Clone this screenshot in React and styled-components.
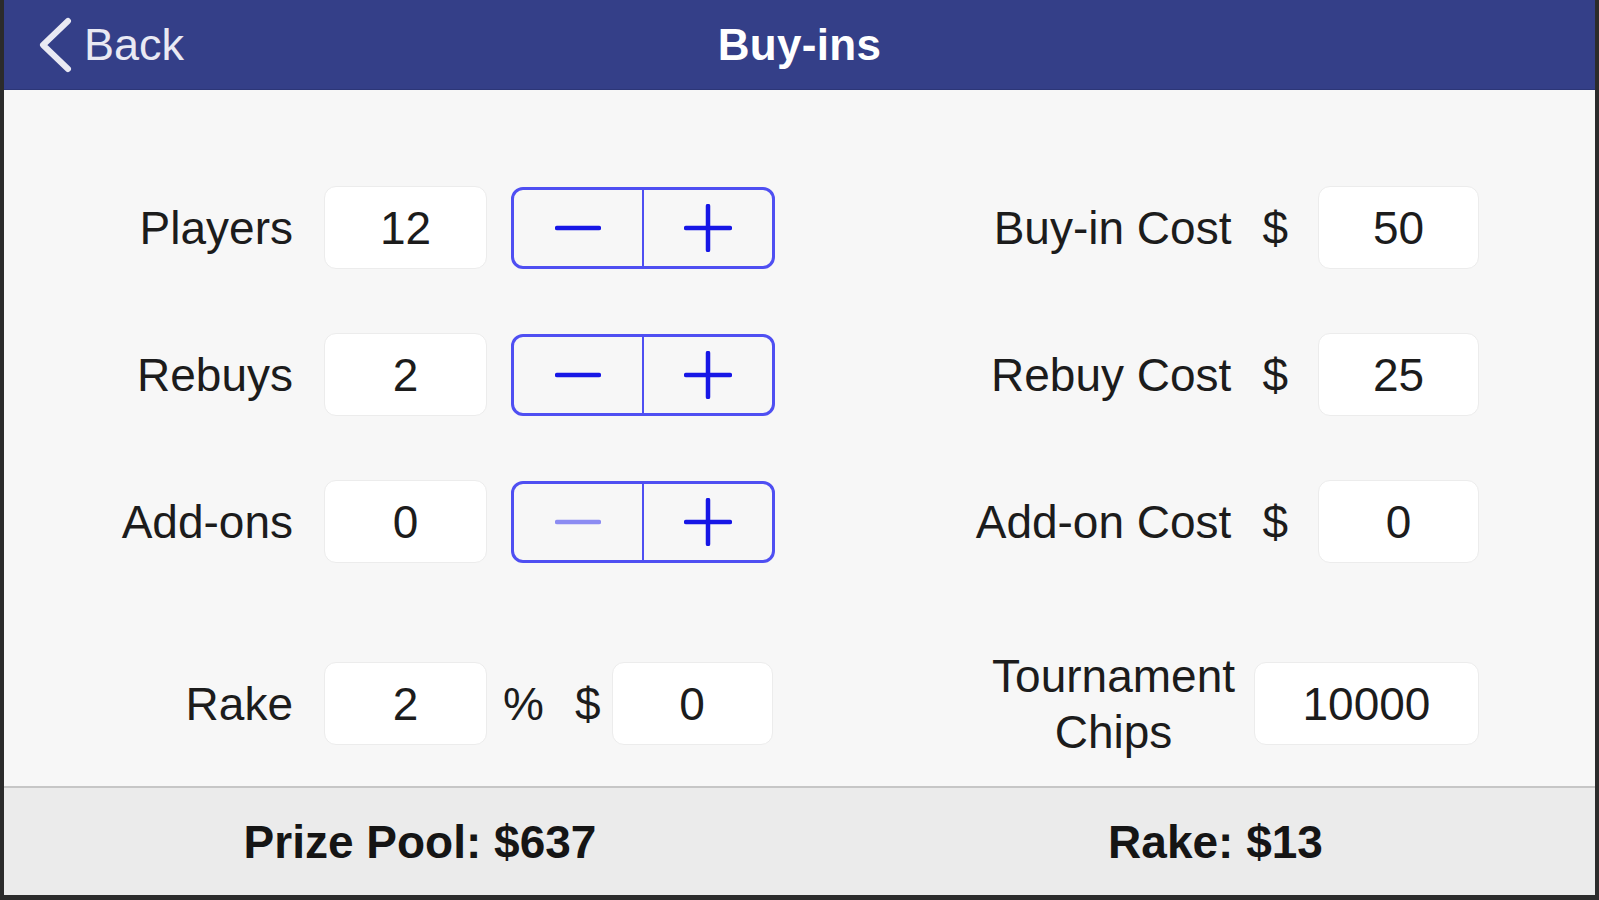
import React from 'react';
import styled, { createGlobalStyle } from 'styled-components';

const GlobalStyle = createGlobalStyle`
  html, body {
    margin: 0;
    padding: 0;
    background: #2a2a2a;
  }
  * {
    box-sizing: border-box;
  }
`;

const Screen = styled.div`
  width: 1599px;
  height: 900px;
  display: flex;
  flex-direction: column;
  border: 4px solid #2b2b2b;
  border-top: none;
  border-bottom-width: 5px;
  background: #f7f7f7;
  font-family: "Liberation Sans", Arial, sans-serif;
  color: #1c1c1c;
  overflow: hidden;
`;

const NavBar = styled.div`
  height: 90px;
  flex: none;
  display: grid;
  grid-template-columns: 1fr auto 1fr;
  align-items: center;
  background: #343f88;
  border-bottom: 1px solid #2c3677;
`;

const BackButton = styled.div`
  display: flex;
  align-items: center;
  padding-left: 34px;
  color: #e9e9f3;
  font-size: 45px;
  gap: 12px;
  line-height: 1;
`;

const Title = styled.div`
  color: #ffffff;
  font-size: 44px;
  font-weight: 700;
  line-height: 1;
  letter-spacing: 0.3px;
`;

const Content = styled.div`
  flex: 1;
  display: grid;
  grid-template-columns: 1fr 1fr;
  grid-template-rows: 83px 83px 83px 118px;
  row-gap: 64px;
  padding: 96px 116px 0 0;
`;

const LeftRow = styled.div`
  display: flex;
  align-items: center;
  padding-top: ${(p) => (p.$spaced ? '35px' : '0')};
`;

const RightRow = styled.div`
  display: flex;
  align-items: center;
  justify-content: flex-end;
  padding-top: ${(p) => (p.$spaced ? '35px' : '0')};
`;

const Label = styled.div`
  width: ${(p) => (p.$wide ? '289px' : 'auto')};
  flex: none;
  text-align: right;
  font-size: 46px;
  line-height: 56px;
  margin-right: 31px;
`;

const StackLabel = styled.div`
  text-align: center;
  font-size: 46px;
  line-height: 56px;
  margin-right: 19px;
`;

const Field = styled.div`
  width: ${(p) => p.$width || 163}px;
  height: 83px;
  flex: none;
  display: flex;
  align-items: center;
  justify-content: center;
  background: #ffffff;
  border: 1px solid #ececec;
  border-radius: 12px;
  font-size: 46px;
  margin-left: ${(p) => p.$offset || 0}px;
`;

const Unit = styled.div`
  font-size: 46px;
  margin-left: ${(p) => p.$offset || 0}px;
`;

const Stepper = styled.div`
  width: 264px;
  height: 82px;
  margin-left: 24px;
  display: flex;
  border: 3px solid #4f4ff2;
  border-radius: 12px;
  overflow: hidden;
`;

const StepButton = styled.div`
  flex: 1;
  display: flex;
  align-items: center;
  justify-content: center;
  & + & {
    border-left: 2.5px solid #4f4ff2;
  }
`;

const Footer = styled.div`
  height: 109px;
  flex: none;
  display: grid;
  grid-template-columns: 832px 1fr;
  align-items: center;
  background: #ebebeb;
  border-top: 2px solid #c6c6c6;
`;

const Total = styled.div`
  text-align: center;
  font-size: 46px;
  font-weight: 700;
  color: #151515;
`;

function Minus({ disabled }) {
  return (
    <svg width="46" height="10" viewBox="0 0 46 10">
      <line x1="2" y1="5" x2="44" y2="5" stroke={disabled ? '#8c8cf2' : '#1717e6'} strokeWidth="4.5" strokeLinecap="round" />
    </svg>
  );
}

function Plus() {
  return (
    <svg width="48" height="48" viewBox="0 0 48 48">
      <line x1="2" y1="24" x2="46" y2="24" stroke="#1717e6" strokeWidth="4.5" strokeLinecap="round" />
      <line x1="24" y1="2" x2="24" y2="46" stroke="#1717e6" strokeWidth="4.5" strokeLinecap="round" />
    </svg>
  );
}

function Counter({ label, value, minDisabled }) {
  return (
    <LeftRow>
      <Label $wide>{label}</Label>
      <Field>{value}</Field>
      <Stepper>
        <StepButton>
          <Minus disabled={minDisabled} />
        </StepButton>
        <StepButton>
          <Plus />
        </StepButton>
      </Stepper>
    </LeftRow>
  );
}

function Cost({ label, value }) {
  return (
    <RightRow>
      <Label>{label}</Label>
      <Unit>$</Unit>
      <Field $width={161} $offset={30}>{value}</Field>
    </RightRow>
  );
}

export default function App() {
  return (
    <>
      <GlobalStyle />
      <Screen>
        <NavBar>
          <BackButton>
            <svg width="34" height="56" viewBox="0 0 34 56">
              <polyline points="30,4 5,28 30,52" fill="none" stroke="#e9e9f3" strokeWidth="6" strokeLinecap="round" strokeLinejoin="round" />
            </svg>
            Back
          </BackButton>
          <Title>Buy-ins</Title>
          <div />
        </NavBar>
        <Content>
          <Counter label="Players" value="12" />
          <Cost label="Buy-in Cost" value="50" />
          <Counter label="Rebuys" value="2" />
          <Cost label="Rebuy Cost" value="25" />
          <Counter label="Add-ons" value="0" minDisabled />
          <Cost label="Add-on Cost" value="0" />
          <LeftRow $spaced>
            <Label $wide>Rake</Label>
            <Field>2</Field>
            <Unit $offset={16}>%</Unit>
            <Unit $offset={31}>$</Unit>
            <Field $width={161} $offset={11}>0</Field>
          </LeftRow>
          <RightRow $spaced>
            <StackLabel>
              Tournament
              <br />
              Chips
            </StackLabel>
            <Field $width={225}>10000</Field>
          </RightRow>
        </Content>
        <Footer>
          <Total>Prize Pool: $637</Total>
          <Total>Rake: $13</Total>
        </Footer>
      </Screen>
    </>
  );
}
